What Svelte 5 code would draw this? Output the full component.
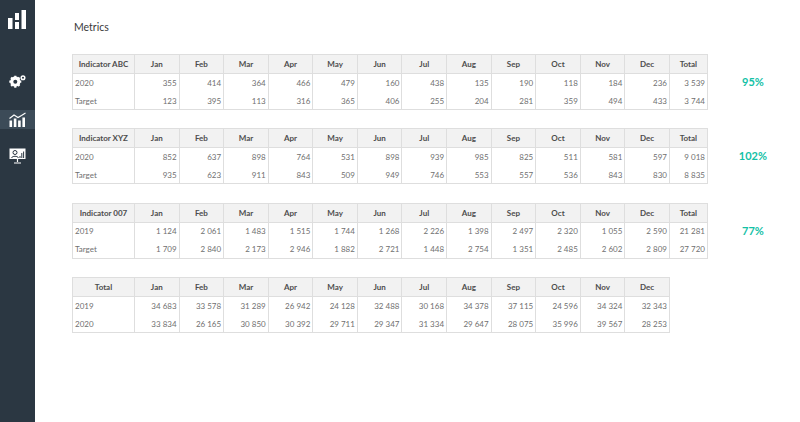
<script>
  const months = ['Jan','Feb','Mar','Apr','May','Jun','Jul','Aug','Sep','Oct','Nov','Dec'];
  const tables = [
    { title:'Indicator ABC', total:true, pct:'95%', rows:[
      ['2020','355','414','364','466','479','160','438','135','190','118','184','236','3 539'],
      ['Target','123','395','113','316','365','406','255','204','281','359','494','433','3 744']]},
    { title:'Indicator XYZ', total:true, pct:'102%', rows:[
      ['2020','852','637','898','764','531','898','939','985','825','511','581','597','9 018'],
      ['Target','935','623','911','843','509','949','746','553','557','536','843','830','8 835']]},
    { title:'Indicator 007', total:true, pct:'77%', rows:[
      ['2019','1 124','2 061','1 483','1 515','1 744','1 268','2 226','1 398','2 497','2 320','1 055','2 590','21 281'],
      ['Target','1 709','2 840','2 173','2 946','1 882','2 721','1 448','2 754','1 351','2 485','2 602','2 809','27 720']]},
    { title:'Total', total:false, pct:'', rows:[
      ['2019','34 683','33 578','31 289','26 942','24 128','32 488','30 168','34 378','37 115','24 596','34 324','32 343'],
      ['2020','33 834','26 165','30 850','30 392','29 711','29 347','31 334','29 647','28 075','35 996','39 567','28 253']]}
  ];
</script>

<div class="page">
  <aside class="side">
    <div class="logo">
      <svg width="18" height="19" viewBox="0 0 18 19" fill="#fff"><rect x="0" y="8" width="4.500" height="11"/><rect x="7" y="3" width="4" height="7"/><rect x="7" y="12" width="4" height="7"/><rect x="13.500" y="0" width="4.500" height="19"/></svg>
    </div>
    <div class="item gear">
      <svg width="17" height="13" viewBox="0 0 17 13"><circle cx="6.300" cy="6.700" r="3.700" fill="none" stroke="#fff" stroke-width="2.800"/><path d="M6.300.7v12M.3 6.700h12M2.100 2.500l8.400 8.400M10.500 2.500l-8.400 8.400" stroke="#fff" stroke-width="2.200"/><circle cx="6.300" cy="6.700" r="2" fill="#2b3742"/><circle cx="14" cy="2.800" r="1.800" fill="none" stroke="#fff" stroke-width="1.500"/></svg>
    </div>
    <div class="item active">
      <svg width="17" height="15" viewBox="0 0 17 15" fill="#fff"><rect x="0.500" y="8.500" width="2.600" height="6.500"/><rect x="4.800" y="6.500" width="2.600" height="8.500"/><rect x="9.100" y="8.500" width="2.600" height="6.500"/><rect x="13.400" y="5.500" width="2.600" height="9.500"/><path d="M0.500 6.500 5 3l4 2.500 3.500-2L16.500 1" fill="none" stroke="#fff" stroke-width="1.100"/></svg>
    </div>
    <div class="item present">
      <svg width="17" height="16" viewBox="0 0 17 16" fill="none"><rect x="0.500" y="0.500" width="16" height="10.500" fill="#fff"/><circle cx="6" cy="4.500" r="2" stroke="#2b3742" stroke-width="1"/><path d="M2.500 10c.7-2.300 6.300-2.300 7 0" stroke="#2b3742" stroke-width="1"/><path d="M11 8v2M12.800 5v5M14.600 3.500V10" stroke="#2b3742" stroke-width="1"/><path d="M8.500 11v3M5 15h7" stroke="#fff" stroke-width="1.200"/></svg>
    </div>
  </aside>
  <main class="main">
    <h1>Metrics</h1>
    <div class="stack">
      {#each tables as t}
        <div class="block">
          <table class:short={!t.total}>
            <colgroup>
              <col class="c0"/>
              {#each months as _}<col class="cm"/>{/each}
              {#if t.total}<col class="ct"/>{/if}
            </colgroup>
            <thead><tr>
              <th>{t.title}</th>
              {#each months as m}<th>{m}</th>{/each}
              {#if t.total}<th>Total</th>{/if}
            </tr></thead>
            <tbody>
              {#each t.rows as r}
                <tr>{#each r as v, i}<td class:label={i===0}>{v}</td>{/each}</tr>
              {/each}
            </tbody>
          </table>
          {#if t.pct}<div class="pct">{t.pct}</div>{/if}
        </div>
      {/each}
    </div>
  </main>
</div>

<style>
  :global(body){margin:0;background:#fff;}
  .page{display:flex;width:800px;height:422px;overflow:hidden;font-family:Lato,"Liberation Sans",sans-serif;color:#595959;}
  .side{width:35px;background:#2b3742;display:flex;flex-direction:column;flex:none;}
  .logo{height:38px;display:flex;align-items:center;justify-content:center;padding-right:1px;}
  .item{display:flex;align-items:center;justify-content:center;padding-right:1px;}
  .gear{height:21px;margin-top:33px;margin-bottom:18px;}
  .active{height:19px;background:#3c4b58;margin-bottom:16px;}
  .present{height:21px;}
  .main{padding:20px 0 0 37px;flex:1;}
  h1{margin:0 0 20px 2px;font-size:10.500px;font-weight:400;color:#3a3a3a;line-height:14px;}
  .stack{display:flex;flex-direction:column;gap:18.330px;}
  .block{display:flex;align-items:flex-start;}
  table{border-collapse:collapse;table-layout:fixed;width:635px;font-size:8px;}
  table.short{width:597px;}
  .c0{width:62px;}
  .cm{width:44.580px;}
  .ct{width:38px;}
  th,td{border:1px solid #dedede;padding:0 2px;box-sizing:border-box;}
  th{height:19px;background:#f2f2f2;font-weight:700;color:#4d4d4d;text-align:center;}
  td{height:18px;text-align:right;border-top:none;border-bottom:none;color:#707070;}
  tbody tr:last-child td{border-bottom:1px solid #dedede;padding-top:1px;}
  td.label{text-align:left;}
  .pct{width:90px;text-align:center;margin-top:19px;font-size:11px;font-weight:700;color:#13c1a6;line-height:18px;}
</style>
